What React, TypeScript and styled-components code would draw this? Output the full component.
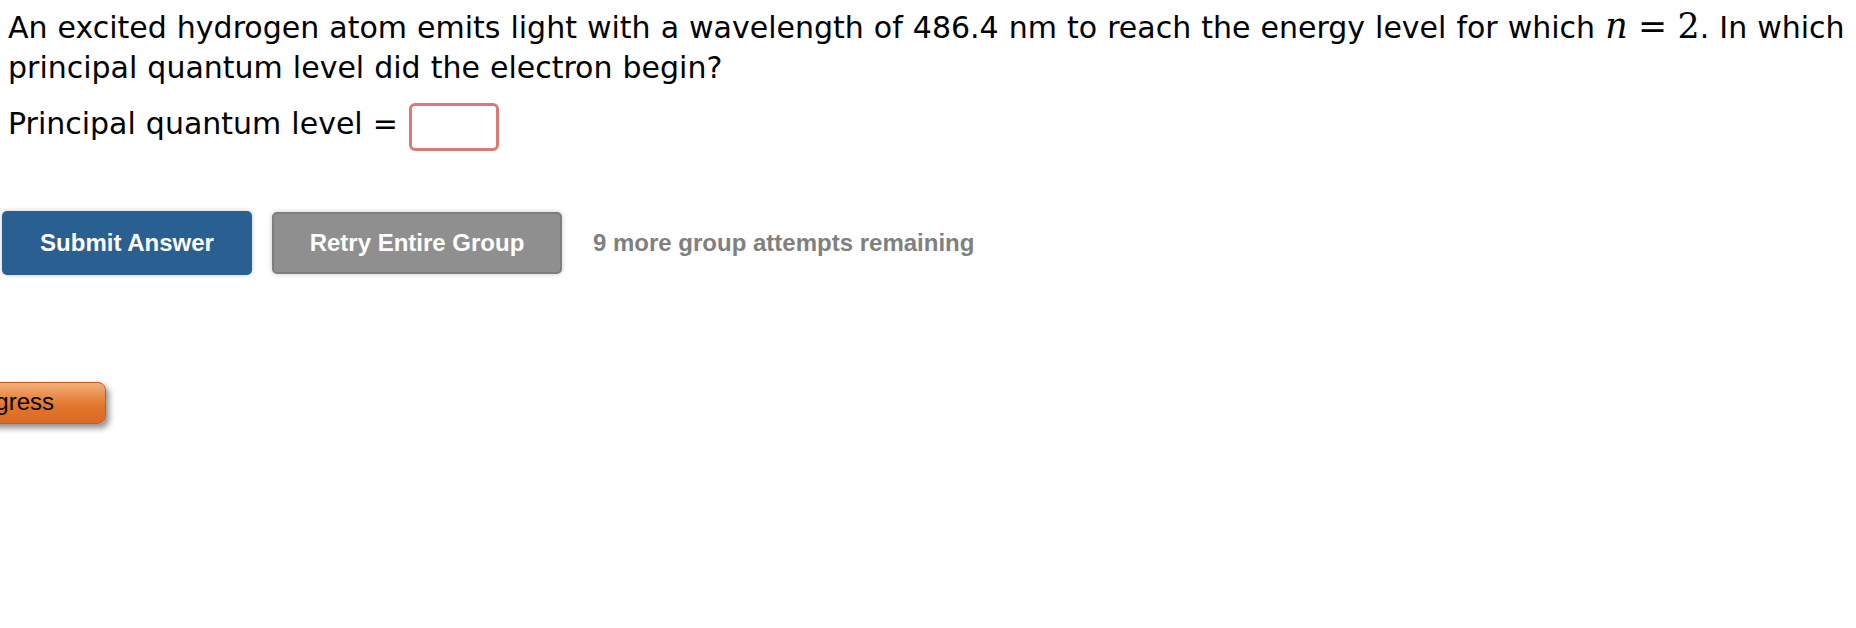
import React from "react";
import styled, { createGlobalStyle } from "styled-components";

const GlobalStyle = createGlobalStyle`
  html, body {
    margin: 0;
    padding: 0;
    background: #ffffff;
  }
  body {
    font-family: "DejaVu Sans", Verdana, sans-serif;
    color: #000000;
    overflow: hidden;
  }
`;

const Page = styled.div`
  width: 1856px;
  height: 628px;
  padding: 8px 0 0 8px;
  box-sizing: border-box;
  overflow: hidden;
`;

const Question = styled.p`
  margin: 0;
  font-size: 30px;
  line-height: 40px;
  word-spacing: 0.5px;
  white-space: nowrap;
`;

const MathVar = styled.span<{ $italic?: boolean }>`
  font-family: "DejaVu Serif", "Liberation Serif", serif;
  font-size: 1.16em;
  line-height: 0;
  font-style: ${({ $italic }) => ($italic ? "italic" : "normal")};
`;

const MathOp = styled.span`
  font-family: "DejaVu Serif", "Liberation Serif", serif;
  font-size: 1.16em;
  line-height: 0;
  margin: 0 0.3em;
`;

const AnswerRow = styled.div`
  display: flex;
  align-items: flex-start;
  margin-top: 15px;
`;

const Label = styled.span`
  font-size: 30px;
  line-height: 32px;
  word-spacing: 0.5px;
  padding-top: 5px;
  margin-right: 11px;
`;

const AnswerInput = styled.input`
  width: 90px;
  height: 48px;
  box-sizing: border-box;
  border: 3px solid #d97a79;
  border-radius: 6px;
  background: #ffffff;
  outline: none;
  padding: 0 6px;
  font-size: 24px;
`;

const ButtonRow = styled.div`
  display: flex;
  align-items: center;
  gap: 20px;
  margin: 60px 0 0 -6px;
  font-family: "Liberation Sans", Arial, sans-serif;
`;

const ActionButton = styled.button<{ $variant: "primary" | "secondary" }>`
  box-sizing: border-box;
  width: ${({ $variant }) => ($variant === "primary" ? "250px" : "290px")};
  height: ${({ $variant }) => ($variant === "primary" ? "64px" : "62px")};
  border-radius: 5px;
  border: ${({ $variant }) => ($variant === "primary" ? "none" : "2px solid #7e7e7e")};
  background: ${({ $variant }) => ($variant === "primary" ? "#2a5f92" : "#8f8f8f")};
  color: #ffffff;
  font-family: "Liberation Sans", Arial, sans-serif;
  font-weight: bold;
  font-size: 24px;
  box-shadow: 0 0 5px rgba(0, 0, 0, 0.22);
  cursor: pointer;
  padding: 0;
`;

const Attempts = styled.span`
  margin-left: 11px;
  color: #808080;
  font-weight: bold;
  font-size: 24px;
`;

const ProgressButton = styled.button`
  display: block;
  margin: 107px 0 0 -58px;
  box-sizing: border-box;
  width: 156px;
  height: 42px;
  padding: 0 0 2px 0;
  text-align: left;
  text-indent: 7px;
  border: 1px solid #c45a24;
  border-radius: 8px;
  background: linear-gradient(
    to bottom,
    #f2b07c 0%,
    #e98a47 35%,
    #e2742c 60%,
    #dc6a22 100%
  );
  box-shadow: 3px 4px 6px rgba(0, 0, 0, 0.45);
  color: #000000;
  font-family: "Liberation Sans", Arial, sans-serif;
  font-size: 24px;
  cursor: pointer;
`;

export default function App() {
  return (
    <>
      <GlobalStyle />
      <Page>
        <Question>
          An excited hydrogen atom emits light with a wavelength of 486.4 nm to reach the energy
          level for which <MathVar $italic>n</MathVar>
          <MathOp>=</MathOp>
          <MathVar>2</MathVar>. In which
          <br />
          principal quantum level did the electron begin?
        </Question>
        <AnswerRow>
          <Label>Principal quantum level =</Label>
          <AnswerInput type="text" aria-label="Principal quantum level" />
        </AnswerRow>
        <ButtonRow>
          <ActionButton $variant="primary">Submit Answer</ActionButton>
          <ActionButton $variant="secondary">Retry Entire Group</ActionButton>
          <Attempts>9 more group attempts remaining</Attempts>
        </ButtonRow>
        <ProgressButton>Progress</ProgressButton>
      </Page>
    </>
  );
}
